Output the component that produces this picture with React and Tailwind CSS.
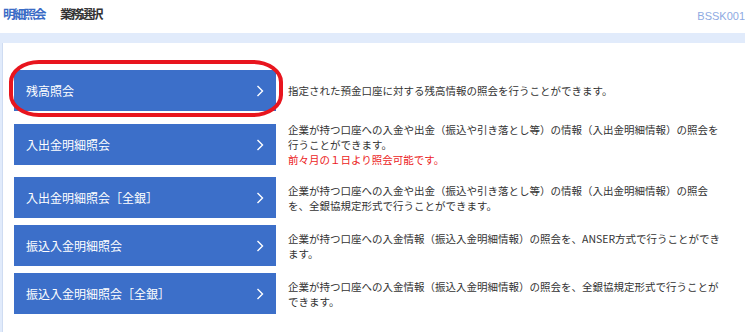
import React from "react";

const rows = [
  {
    label: "残高照会",
    lines: ["指定された預金口座に対する残高情報の照会を行うことができます。"],
    highlight: true,
    mt: "mt-[27px]",
  },
  {
    label: "入出金明細照会",
    lines: [
      "企業が持つ口座への入金や出金（振込や引き落とし等）の情報（入出金明細情報）の照会を",
      "行うことができます。",
    ],
    note: "前々月の１日より照会可能です。",
    mt: "mt-[11px]",
  },
  {
    label: "入出金明細照会［全銀］",
    lines: [
      "企業が持つ口座への入金や出金（振込や引き落とし等）の情報（入出金明細情報）の照会",
      "を、全銀協規定形式で行うことができます。",
    ],
    mt: "mt-[10px]",
  },
  {
    label: "振込入金明細照会",
    lines: [
      "企業が持つ口座への入金情報（振込入金明細情報）の照会を、ANSER方式で行うことができ",
      "ます。",
    ],
    mt: "mt-[7px]",
  },
  {
    label: "振込入金明細照会［全銀］",
    lines: [
      "企業が持つ口座への入金情報（振込入金明細情報）の照会を、全銀協規定形式で行うことが",
      "できます。",
    ],
    mt: "mt-[7px]",
  },
];

const Chevron = () => (
  <svg width="8" height="12" viewBox="0 0 8 12" className="shrink-0">
    <polyline points="1.5,1 6.5,6 1.5,11" fill="none" stroke="white" strokeWidth="1.4" />
  </svg>
);

export default function App() {
  return (
    <div
      className="w-[745px] h-[332px] overflow-hidden bg-white flex flex-col"
      style={{ fontFamily: '"Noto Sans CJK JP", "Liberation Sans", sans-serif' }}
    >
      {/* Header */}
      <div className="h-[33px] flex items-center shrink-0 pb-[4px]">
        <div className="w-[60px] pl-[3px] text-[12.5px] font-bold tracking-[-2.2px] text-[#3b6cc6]">明細照会</div>
        <div className="text-[12.5px] font-bold tracking-[-2.2px] text-[#333]">業務選択</div>
        <div
          className="ml-auto text-[11px] text-[#8eaae2] leading-none pt-[4px]"
          style={{ fontFamily: '"Liberation Sans", sans-serif' }}
        >
          BSSK001
        </div>
      </div>

      {/* Band */}
      <div className="h-[10px] bg-[#e1ebfb] shrink-0" />

      {/* Body */}
      <div className="flex-1 flex bg-[#e1ebfb] pl-[2px]">
        <div className="flex-1 bg-white border-l border-[#cfdcf2] pl-[11px] flex flex-col">
          {rows.map((row) => (
            <div key={row.label} className={`${row.mt} flex items-center`}>
              <div className="relative shrink-0">
                <button className="w-[262px] h-[41px] bg-[#3c6fc9] flex items-center justify-between pl-[12px] pr-[12px] text-white text-[12px]">
                  <span>{row.label}</span>
                  <Chevron />
                </button>
                {row.highlight && (
                  <div className="absolute -left-[5px] -top-[10px] -right-[7px] -bottom-[6px] border-[4px] border-[#e8151e] rounded-[30px_/_22px] pointer-events-none" />
                )}
              </div>
              <div className="pl-[12px] text-[10.5px] leading-[15px] text-[#333] whitespace-nowrap">
                {row.lines.map((l, i) => (
                  <div key={i}>{l}</div>
                ))}
                {row.note && <div className="text-[#ec1c24]">{row.note}</div>}
              </div>
            </div>
          ))}
        </div>
      </div>
    </div>
  );
}
